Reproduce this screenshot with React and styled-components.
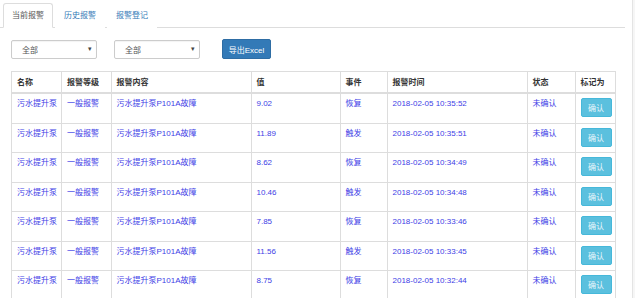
import React from 'react'
import styled, { createGlobalStyle } from 'styled-components'

const GlobalStyle = createGlobalStyle`
  html, body {
    margin: 0;
    padding: 0;
    background: #f6f6f6;
  }
  body {
    font-family: 'Liberation Sans', 'Noto Sans CJK SC', sans-serif;
    font-size: 8px;
    color: #333;
  }
`

const rows = [
  { value: '9.02', event: '恢复', time: '2018-02-05 10:35:52' },
  { value: '11.89', event: '触发', time: '2018-02-05 10:35:51' },
  { value: '8.62', event: '恢复', time: '2018-02-05 10:34:49' },
  { value: '10.46', event: '触发', time: '2018-02-05 10:34:48' },
  { value: '7.85', event: '恢复', time: '2018-02-05 10:33:46' },
  { value: '11.56', event: '触发', time: '2018-02-05 10:33:45' },
  { value: '8.75', event: '恢复', time: '2018-02-05 10:32:44' },
]

const columns = [
  { title: '名称', width: 50 },
  { title: '报警等级', width: 49.5 },
  { title: '报警内容', width: 140 },
  { title: '值', width: 89 },
  { title: '事件', width: 47 },
  { title: '报警时间', width: 140 },
  { title: '状态', width: 48 },
  { title: '标记为', width: 40.5 },
]

const App = () => {
  return (
    <Page>
      <GlobalStyle />
      <Tabs>
        <Tab active>当前报警</Tab>
        <Tab>历史报警</Tab>
        <Tab>报警登记</Tab>
      </Tabs>
      <Toolbar>
        <Select>
          <span>全部</span>
          <Caret>▾</Caret>
        </Select>
        <Select>
          <span>全部</span>
          <Caret>▾</Caret>
        </Select>
        <ExportButton>导出Excel</ExportButton>
      </Toolbar>
      <Table>
        <colgroup>
          {columns.map((col, index) => (
            <col key={index} style={{ width: col.width }} />
          ))}
        </colgroup>
        <thead>
          <tr>
            {columns.map((col, index) => (
              <Th key={index}>{col.title}</Th>
            ))}
          </tr>
        </thead>
        <tbody>
          {rows.map((item, index) => {
            return (
              <tr key={index}>
                <Td>污水提升泵</Td>
                <Td>一般报警</Td>
                <Td>污水提升泵P101A故障</Td>
                <Td>{item.value}</Td>
                <Td>{item.event}</Td>
                <Td>{item.time}</Td>
                <Td>未确认</Td>
                <Td>
                  <ConfirmButton>确认</ConfirmButton>
                </Td>
              </tr>
            )
          })}
        </tbody>
      </Table>
    </Page>
  )
}

const Page = styled.div`
  width: 633px;
  height: 298px;
  overflow: hidden;
  background: #fff;
  border-right: 1px solid #e4e4e4;
  box-sizing: border-box;
  padding-top: 3px;
`

const Tabs = styled.ul`
  display: flex;
  list-style: none;
  margin: 0;
  padding: 0 0 0 3px;
  width: 622px;
  border-bottom: 1px solid #ddd;
`

const Tab = styled.li`
  margin-right: 2px;
  margin-bottom: -1px;
  padding: 0 8px;
  height: 24px;
  line-height: 24px;
  border: 1px solid ${(p) => (p.active ? '#ddd' : 'transparent')};
  border-bottom-color: ${(p) => (p.active ? '#fff' : 'transparent')};
  border-radius: 3px 3px 0 0;
  background: #fff;
  color: ${(p) => (p.active ? '#555' : '#337ab7')};
  box-sizing: border-box;
  height: 25px;
`

const Toolbar = styled.div`
  display: flex;
  align-items: center;
  padding: 11px 0 0 11px;
  height: 20px;
`

const Select = styled.div`
  display: flex;
  align-items: center;
  justify-content: space-between;
  width: 86px;
  height: 19px;
  box-sizing: border-box;
  padding: 0 4px 0 10px;
  margin-right: 17px;
  border: 1px solid #ccc;
  border-radius: 2px;
  color: #555;
  box-shadow: inset 0 1px 1px rgba(0, 0, 0, 0.05);
`

const Caret = styled.span`
  font-size: 7px;
  color: #444;
`

const ExportButton = styled.button`
  margin-left: 5px;
  width: 49px;
  height: 20px;
  padding: 0;
  border: 1px solid #2e6da4;
  border-radius: 2px;
  background: #337ab7;
  color: #fff;
  font-family: inherit;
  font-size: 8px;
`

const Table = styled.table`
  margin: 12px 0 0 11px;
  width: 604px;
  table-layout: fixed;
  border-collapse: collapse;
  border: 1px solid #ddd;
`

const Th = styled.th`
  text-align: left;
  font-weight: bold;
  color: #333;
  padding: 4.5px 5px;
  line-height: 11px;
  border: 1px solid #ddd;
  border-bottom-width: 2px;
  white-space: nowrap;
`

const Td = styled.td`
  vertical-align: top;
  padding: 4px 5px 5.5px;
  line-height: 11px;
  color: #4040e6;
  border: 1px solid #ddd;
  white-space: nowrap;
`

const ConfirmButton = styled.button`
  display: block;
  width: 31px;
  height: 19px;
  padding: 0;
  border: 1px solid #46b8da;
  border-radius: 2px;
  background: #5bc0de;
  color: #eaf6fb;
  font-family: inherit;
  font-size: 8px;
`

export default App
